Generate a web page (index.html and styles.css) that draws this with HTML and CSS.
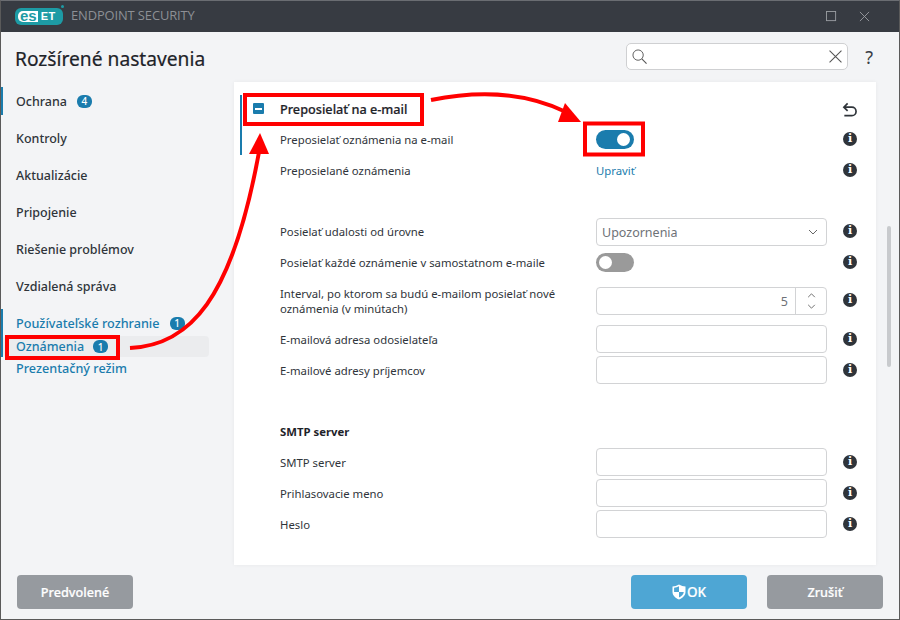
FILE: index.html
```html
<!DOCTYPE html>
<html lang="sk">
<head>
<meta charset="utf-8">
<title>ESET Endpoint Security</title>
<link rel="stylesheet" href="styles.css">
</head>
<body>
<div class="window">
  <header class="titlebar">
    <div class="brand">
      <span class="logo"><span class="logo-es">es</span><span class="logo-et">ET</span><span class="logo-dot"></span></span>
      <span class="product">ENDPOINT SECURITY</span>
    </div>
    <div class="winctl">
      <svg class="ctl" viewBox="0 0 12 12"><rect x="0.5" y="0.5" width="10" height="10" fill="none" stroke="#9a9da2"/></svg>
      <svg class="ctl" viewBox="0 0 12 12"><path d="M1 1l10 10M11 1L1 11" fill="none" stroke="#9a9da2"/></svg>
    </div>
  </header>
  <div class="topbar">
    <h1 class="title">Rozšírené nastavenia</h1>
    <div class="search">
      <svg class="search-ic" viewBox="0 0 16 16"><circle cx="6.500" cy="6.500" r="5.500" fill="none" stroke="#555" stroke-width="1"/><path d="M10.500 10.500l5 5" stroke="#555" stroke-width="1.200"/></svg>
      <svg class="search-x" viewBox="0 0 12 12"><path d="M.5.5l11 11M11.500.5l-11 11" stroke="#555" fill="none"/></svg>
    </div>
    <span class="help">?</span>
  </div>
  <div class="content">
    <nav class="side">
      <div class="sgroup">
        <a class="sitem mark">Ochrana <span class="badge">4</span></a>
        <a class="sitem">Kontroly</a>
        <a class="sitem">Aktualizácie</a>
        <a class="sitem">Pripojenie</a>
        <a class="sitem">Riešenie problémov</a>
        <a class="sitem">Vzdialená správa</a>
      </div>
      <div class="ssub">
        <a class="subitem">Používateľské rozhranie <span class="badge">1</span></a>
        <a class="subitem active">Oznámenia <span class="badge">1</span></a>
        <a class="subitem">Prezentačný režim</a>
      </div>
    </nav>
    <main class="panel">
      <div class="form">
        <div class="row head">
          <span class="collapse"></span>
          <span class="head-title">Preposielať na e-mail</span>
          <svg class="undo" viewBox="0 0 16 16"><path d="M6 1L2 5l4 4M2.500 5H10.500a4.500 4.500 0 0 1 0 9H2.500" fill="none" stroke="#2f343a" stroke-width="1.800"/></svg>
        </div>
        <div class="row"><span class="label">Preposielať oznámenia na e-mail</span><span class="ctrl"><span class="toggle on"></span></span><span class="info">i</span></div>
        <div class="row"><span class="label">Preposielané oznámenia</span><span class="ctrl"><a class="link">Upraviť</a></span><span class="info">i</span></div>
        <div class="spacer"></div>
        <div class="row"><span class="label">Posielať udalosti od úrovne</span><span class="ctrl"><span class="field select">Upozornenia<svg class="chev" viewBox="0 0 10 6"><path d="M1 1l4 4 4-4" fill="none" stroke="#666"/></svg></span></span><span class="info">i</span></div>
        <div class="row"><span class="label">Posielať každé oznámenie v samostatnom e-maile</span><span class="ctrl"><span class="toggle off"></span></span><span class="info">i</span></div>
        <div class="row tall"><span class="label">Interval, po ktorom sa budú e-mailom posielať nové oznámenia (v minútach)</span><span class="ctrl"><span class="field spin"><span class="spin-val">5</span><span class="spin-btns"><svg viewBox="0 0 10 6"><path d="M1 5l4-4 4 4" fill="none" stroke="#555"/></svg><svg viewBox="0 0 10 6"><path d="M1 1l4 4 4-4" fill="none" stroke="#555"/></svg></span></span></span><span class="info">i</span></div>
        <div class="row low"><span class="label">E-mailová adresa odosielateľa</span><span class="ctrl"><span class="field"></span></span><span class="info">i</span></div>
        <div class="row low"><span class="label">E-mailové adresy príjemcov</span><span class="ctrl"><span class="field"></span></span><span class="info">i</span></div>
        <div class="spacer"></div>
        <div class="row low"><span class="label sec">SMTP server</span></div>
        <div class="row low"><span class="label">SMTP server</span><span class="ctrl"><span class="field"></span></span><span class="info">i</span></div>
        <div class="row low"><span class="label">Prihlasovacie meno</span><span class="ctrl"><span class="field"></span></span><span class="info">i</span></div>
        <div class="row low"><span class="label">Heslo</span><span class="ctrl"><span class="field"></span></span><span class="info">i</span></div>
      </div>
    </main>
    <div class="scrollbar"><span class="thumb"></span></div>
  </div>
  <footer class="footer">
    <button class="btn gray">Predvolené</button>
    <span class="grow"></span>
    <button class="btn blue"><svg class="shield" viewBox="0 0 14 16"><path d="M7 .5C9 1.800 11.500 2.500 13.500 2.500V8c0 3.500-3 6-6.500 7.500C3.500 14 .5 11.500.5 8V2.500C2.500 2.500 5 1.800 7 .5z" fill="#fff"/><path d="M7 2.300V8H2.100V3.700C3.800 3.500 5.500 3 7 2.300zM7 8h4.800c-.3 2.500-2.300 4.200-4.800 5.400z" fill="#4ea6d4"/></svg>OK</button>
    <button class="btn gray">Zrušiť</button>
  </footer>
  <svg class="notes" viewBox="0 0 900 620" width="900" height="620">
    <g fill="none" stroke="#f00" stroke-width="4">
      <rect x="7" y="337" width="111" height="21"/>
      <rect x="245" y="95" width="177" height="29"/>
      <rect x="585" y="123.500" width="58" height="31"/>
    </g>
    <g fill="none" stroke="#f00" stroke-width="4" stroke-linecap="butt">
      <path d="M130 348C190 345 232 300 259 152"/>
      <path d="M431 100C480 90 525 92 566 112"/>
    </g>
    <g fill="#f00">
      <polygon points="260,133 249,154 269,154"/>
      <polygon points="581,122 558,122 565,103"/>
    </g>
  </svg>
</div>
</body>
</html>
```
FILE: styles.css
```css
* { box-sizing: border-box; }
html, body { margin: 0; height: 100%; }
body { font-family: "Noto Sans", "Open Sans", sans-serif; color: #2f343a; background: #f3f4f6; }
.window { position: relative; width: 900px; height: 620px; display: flex; flex-direction: column; background: #f3f4f6; border: 1px solid #5a5a5a; border-top-color: #6a6d72; overflow: hidden; }
.titlebar { height: 31px; flex: none; background: #373b42; display: flex; align-items: center; justify-content: space-between; padding: 0 29px 0 14px; }
.brand { display: flex; align-items: center; gap: 8px; }
.logo { position: relative; display: flex; align-items: center; height: 17px; width: 48px; padding: 0 3px; background: #1d9ba5; border-radius: 6px; font-family: "Liberation Sans", sans-serif; font-weight: 700; font-size: 15px; line-height: 1; }
.logo-es { background: #fff; color: #1d9ba5; border-radius: 5px 0 0 5px; height: 11px; line-height: 10px; padding: 0 1px 0 2px; }
.logo-et { color: #fff; padding-left: 3px; font-size: 11px; letter-spacing: .5px; }
.logo-dot { position: absolute; right: -1px; top: -3px; width: 3px; height: 3px; border-radius: 50%; background: #1d9ba5; }
.product { color: #8d9095; font-size: 12.900px; letter-spacing: -.1px; font-family: "Open Sans", sans-serif; line-height: 1; margin-top: -2px; }
.winctl { display: flex; gap: 22px; align-items: center; }
.ctl { width: 11px; height: 11px; display: block; }
.topbar { height: 50px; flex: none; display: flex; align-items: center; padding: 3px 26px 0 14px; }
.title { flex: 1; margin: 0; font-size: 19.200px; font-weight: 400; color: #1e2329; -webkit-text-stroke: .2px #1e2329; }
.search { width: 222px; height: 27px; background: #fff; border: 1px solid #cfd0d2; border-radius: 5px; display: flex; align-items: center; justify-content: space-between; padding: 0 5px 0 5px; margin-top: -4px; }
.search-ic { width: 15px; height: 15px; }
.search-x { width: 13px; height: 13px; }
.help { font-size: 18px; color: #3a3f45; margin-left: 17px; margin-top: -3px; }
.content { flex: 1; min-height: 0; display: flex; }
.side { width: 233px; flex: none; padding-top: 1px; }
.sgroup { display: flex; flex-direction: column; }
.sitem { height: 37px; display: flex; align-items: center; gap: 10px; font-size: 12.500px; color: #2f343a; border-left: 2px solid transparent; padding-left: 13px; font-weight: 500; }
.sitem.mark { height: 28px; margin-top: 4px; margin-bottom: 5px; border-left-color: #1a7cad; }
.ssub { margin-top: 4px; padding-top: 3px; border-left: 2px solid #1a7cad; display: flex; flex-direction: column; height: 48px; }
.subitem { height: 22px; flex: none; display: flex; align-items: center; gap: 10px; padding-left: 13px; font-size: 12.650px; color: #1a7cad; font-weight: 500; width: 206px; border-radius: 4px; }
.subitem.active { background: #ebecee; margin-top: 2px; height: 21px; gap: 9px; font-size: 12.500px; }
.badge { display: inline-flex; align-items: center; justify-content: center; width: 15px; height: 13px; background: #1a7cad; color: #fff; border-radius: 6px; font-size: 10px; font-weight: 500; }
.panel { width: 642px; flex: none; height: 483px; background: #fff; box-shadow: 0 0 4px rgba(0,0,0,.05); display: flex; position: relative; overflow: hidden; }
.form { flex: 1; padding: 11px 0 0 46px; }
.row { display: flex; align-items: center; min-height: 31px; position: relative; }
.row.tall { min-height: 45px; }
.spacer { height: 30px; }
.form > .row:nth-child(1)::before, .form > .row:nth-child(2)::before { content: ""; position: absolute; left: -40px; top: 0; bottom: 0; width: 2px; background: #1a7cad; }
.form > .row:nth-child(1)::before { top: 2px; }
.collapse { position: absolute; left: -27px; top: 10px; width: 11px; height: 11px; background: #1a7cad; border-radius: 1px; }
.collapse::after { content: ""; position: absolute; left: 2px; top: 4.500px; width: 7px; height: 2px; background: #fff; }
.head-title { font-size: 12.700px; font-weight: 500; color: #1e2329; -webkit-text-stroke: .2px #1e2329; }
.undo { position: absolute; left: 562px; top: 9px; width: 15px; height: 16px; }
.label { width: 316px; flex: none; font-size: 11.330px; line-height: 15px; color: #2f343a; padding-right: 30px; }
.low .label { padding-top: 2px; }
.sec { font-weight: 700; color: #1e2329; }
.ctrl { width: 231px; flex: none; display: flex; align-items: center; }
.info { width: 14px; height: 14px; margin: -1px 0 0 16px; background: #2f343a; color: #fff; border-radius: 50%; font-family: "DejaVu Serif", serif; font-weight: 700; font-size: 11px; line-height: 14px; text-align: center; flex: none; }
.low .info { margin-top: 1px; }
.toggle { width: 38px; height: 19px; border-radius: 10px; position: relative; display: block; }
.toggle.on { background: #1a7cad; }
.toggle.off { background: #9a9a9a; }
.toggle::after { content: ""; position: absolute; top: 3px; width: 13px; height: 13px; background: #fff; border-radius: 50%; }
.toggle.on::after { right: 4px; }
.toggle.off::after { left: 3px; }
.link { color: #1a7cad; font-size: 11.330px; }
.field { display: flex; align-items: center; width: 231px; height: 28px; padding: 1px 5px 0; background: #fff; border: 1px solid #d2d3d5; border-radius: 4px; font-size: 12.500px; color: #6e7277; position: relative; }
.select { justify-content: space-between; padding-right: 8px; }
.chev { width: 10px; height: 6px; }
.spin { padding: 0; justify-content: flex-end; }
.spin-val { padding: 1px 7px 0 0; }
.spin-btns { width: 31px; height: 100%; border-left: 1px solid #d2d3d5; display: flex; flex-direction: column; align-items: center; justify-content: center; gap: 6px; }
.spin-btns svg { width: 9px; height: 5px; }
.scrollbar { flex: 1; padding: 144px 0 0 11px; }
.thumb { display: block; width: 4px; height: 141px; background: #c8cacd; border-radius: 2px; }
.grow { flex: 1; }
.footer { height: 54px; flex: none; display: flex; align-items: flex-start; padding: 10px 16px 0; gap: 20px; }
.btn { width: 116px; height: 34px; border: 0; border-radius: 4px; color: #fff; font-family: "Noto Sans", sans-serif; font-size: 12.700px; font-weight: 500; display: flex; align-items: center; justify-content: center; gap: 1px; -webkit-text-stroke: .2px #fff; }
.gray { background: #969a9f; }
.blue { background: #4ea6d4; font-size: 13.500px; }
.shield { width: 14px; height: 16px; }
.notes { position: absolute; left: -1px; top: -1px; pointer-events: none; }
```
